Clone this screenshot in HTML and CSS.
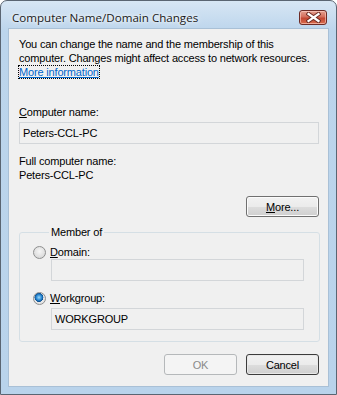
FILE: index.html
```html
<!DOCTYPE html>
<html>
<head>
<meta charset="utf-8">
<link rel="stylesheet" href="styles.css">
</head>
<body>
<div class="window">
  <div class="titlebar">
    <span class="title">Computer Name/Domain Changes</span>
    <div class="close">
      <svg width="15" height="11" viewBox="0 0 15 11">
        <path d="M2.5 2 L12.5 9 M12.5 2 L2.5 9" stroke="#6b2a22" stroke-width="4" stroke-linecap="square" fill="none"/>
        <path d="M2.5 2 L12.5 9 M12.5 2 L2.5 9" stroke="#ffffff" stroke-width="2.2" stroke-linecap="square" fill="none"/>
      </svg>
    </div>
  </div>
  <div class="client">
    <p class="intro">You can change the name and the membership of this<br>computer. Changes might affect access to network resources.<br><span class="link">More information</span></p>
    <div class="label first"><u>C</u>omputer name:</div>
    <div class="textbox">Peters-CCL-PC</div>
    <div class="label full">Full computer name:</div>
    <div class="label">Peters-CCL-PC</div>
    <div class="morerow"><div class="btn"><u>M</u>ore...</div></div>
    <fieldset class="group">
      <legend>Member of</legend>
      <div class="radiorow"><span class="radio"></span><span><u>D</u>omain:</span></div>
      <div class="textbox inner"></div>
      <div class="radiorow second"><span class="radio checked"></span><span><u>W</u>orkgroup:</span></div>
      <div class="textbox inner">WORKGROUP</div>
    </fieldset>
    <div class="buttons">
      <div class="btn disabled">OK</div>
      <div class="btn default">Cancel</div>
    </div>
  </div>
</div>
</body>
</html>
```

FILE: styles.css
```css
* { box-sizing: border-box; }
html, body { margin: 0; padding: 0; background: #ffffff; }
.window {
  width: 337px;
  height: 395px;
  border: 1px solid #5a6572;
  border-radius: 7px 7px 0 0;
  background: linear-gradient(to bottom, #d7e6f4 0px, #bcd5ec 30px, #b9d3eb 100%);
  display: flex;
  flex-direction: column;
  padding: 0 7px 7px 7px;
  font-family: "Liberation Sans", Arial, sans-serif;
  font-size: 11px;
  letter-spacing: -0.17px;
  color: #000;
  overflow: hidden;
}
.titlebar {
  height: 27px;
  display: flex;
  align-items: center;
  justify-content: space-between;
  padding: 0 2px 0 4px;
}
.title {
  font-family: "Open Sans", "Noto Sans", sans-serif;
  font-size: 11.6px;
  letter-spacing: 0;
  color: #1a1a1a;
  margin-top: 5px;
  text-shadow: 0 0 6px #ffffff, 0 0 3px #ffffff;
}
.close {
  width: 28px;
  height: 15px;
  margin-top: 6px;
  border: 1px solid #6d2b25;
  border-radius: 3px;
  background: linear-gradient(to bottom, #e4a090 0%, #d46e5b 45%, #c24632 55%, #d86e4e 100%);
  display: flex;
  align-items: center;
  justify-content: center;
  box-shadow: inset 0 0 0 1px rgba(255,210,200,0.6);
}
.client {
  flex: 1;
  background: #f0f0f0;
  border: 1px solid #a9c0d6;
  padding: 8px 10px 0 10px;
  display: flex;
  flex-direction: column;
}
.intro {
  margin: 0;
  line-height: 14px;
  white-space: nowrap;
}
.link {
  color: #0066cc;
  text-decoration: underline;
  outline: 1px dotted #000;
}
.label {
  line-height: 14px;
}
.label.first { margin-top: 26px; }
.textbox {
  height: 22px;
  border: 1px solid #d3d6d9;
  background: #f0f0f0;
  margin-top: 3px;
  padding: 0 3px;
  line-height: 20px;
  width: 300px;
}
.full { margin-top: 10px; }
.morerow {
  display: flex;
  justify-content: flex-end;
  margin-top: 14px;
  width: 300px;
}
.btn {
  width: 73px;
  height: 21px;
  border: 1px solid #707070;
  border-radius: 3px;
  background: linear-gradient(to bottom, #f2f2f2 0%, #ebebeb 50%, #dddddd 51%, #cfcfcf 100%);
  display: flex;
  align-items: center;
  justify-content: center;
  box-shadow: inset 0 0 0 1px #fbfbfb;
}
.btn.disabled {
  border-color: #b5b8ba;
  background: #f4f4f4;
  color: #8a8a8a;
  box-shadow: none;
}
.btn.default {
  border-color: #3c3c3c;
  box-shadow: inset 0 0 0 1px #e8e8e8;
}
.group {
  margin: 8px 0 0 0;
  width: 300px;
  border: 1px solid #d5dfe5;
  border-radius: 3px;
  padding: 6px 15px 11px 31px;
}
.group legend {
  padding: 0 2px;
  margin-left: -2px;
  line-height: 14px;
}
.radiorow {
  display: flex;
  align-items: center;
  margin-left: -18px;
  gap: 4px;
  line-height: 14px;
}
.radiorow.second { margin-top: 10px; }
.radio {
  width: 13px;
  height: 13px;
  border-radius: 50%;
  border: 1px solid #8e8f8f;
  background: radial-gradient(circle at 50% 40%, #f6f6f6 0%, #dcdcdc 70%, #cfcfcf 100%);
}
.radio.checked {
  background: radial-gradient(circle at 45% 40%, #9fd8f8 0%, #2a8ad4 30%, #0b4c8c 48%, #e8e8e8 52%, #dadada 100%);
}
.textbox.inner {
  width: 253px;
  margin-top: 0;
}
.radiorow.second + .textbox.inner { margin-top: 3px; }
.buttons {
  display: flex;
  justify-content: flex-end;
  gap: 9px;
  width: 300px;
  margin-top: 12px;
}
```
